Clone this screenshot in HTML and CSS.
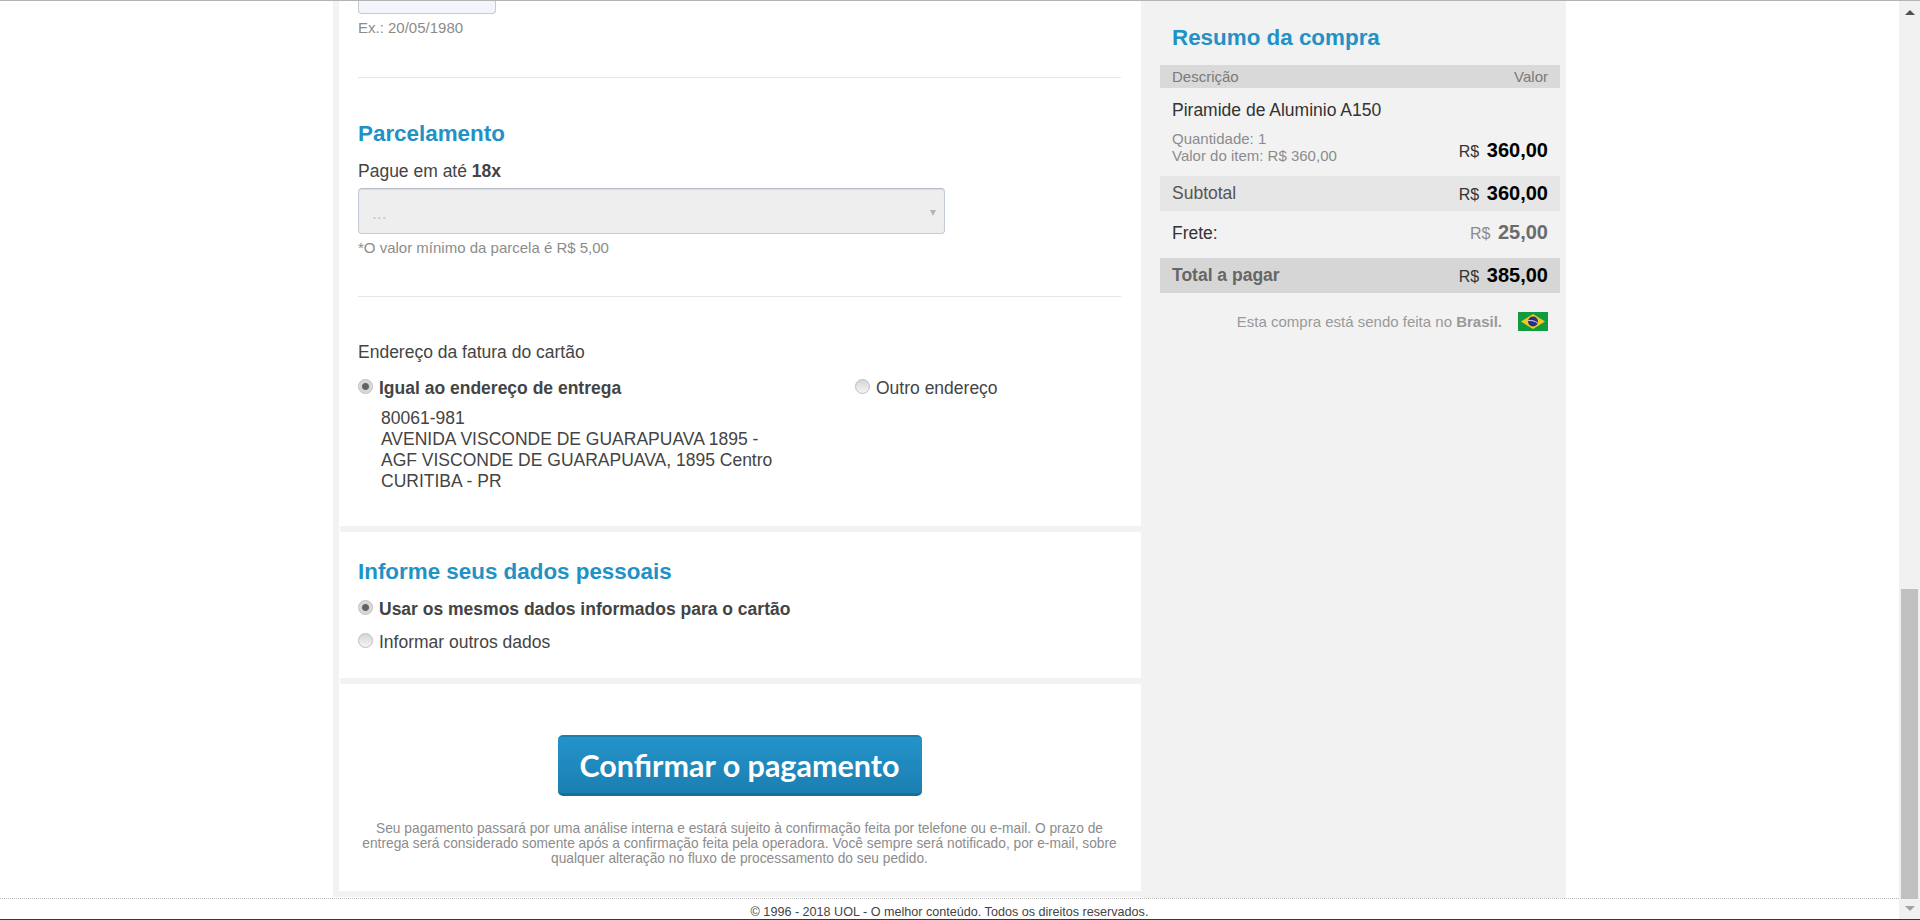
FILE: index.html
```html
<!DOCTYPE html>
<html lang="pt-BR">
<head>
    <meta charset="UTF-8">
    <meta name="viewport" content="width=device-width, initial-scale=1.0">
    <title>Pagamento</title>
    <link rel="stylesheet" href="styles.css">
</head>
<body>
    <div class="page">
        <div class="content">
            <div class="wrap">
                <!-- Payment form -->
                <div class="main">
                    <div class="section section-card">
                        <div class="date-input"></div>
                        <p class="hint">Ex.: 20/05/1980</p>
                        <hr class="rule rule-first">
                        <h2 class="title title-installments">Parcelamento</h2>
                        <p class="installments-label">Pague em até <b>18x</b></p>
                        <div class="select-box">
                            <span class="select-value">...</span>
                            <span class="select-arrow"></span>
                        </div>
                        <p class="hint">*O valor mínimo da parcela é R$ 5,00</p>
                        <hr class="rule rule-second">
                        <p class="address-label">Endereço da fatura do cartão</p>
                        <div class="address-row">
                            <div class="address-col">
                                <label class="option"><input type="radio" name="address" checked><b>Igual ao endereço de entrega</b></label>
                                <p class="address">80061-981<br>AVENIDA VISCONDE DE GUARAPUAVA 1895 -<br>AGF VISCONDE DE GUARAPUAVA, 1895 Centro<br>CURITIBA - PR</p>
                            </div>
                            <label class="option"><input type="radio" name="address">Outro endereço</label>
                        </div>
                    </div>

                    <div class="section section-personal">
                        <h2 class="title">Informe seus dados pessoais</h2>
                        <label class="option option-first"><input type="radio" name="personal" checked><b>Usar os mesmos dados informados para o cartão</b></label>
                        <label class="option option-second"><input type="radio" name="personal">Informar outros dados</label>
                    </div>

                    <div class="section-confirm">
                        <button type="button" class="confirm-button">Confirmar o pagamento</button>
                        <p class="confirm-note">Seu pagamento passará por uma análise interna e estará sujeito à confirmação feita por telefone ou e-mail. O prazo de entrega será considerado somente após a confirmação feita pela operadora. Você sempre será notificado, por e-mail, sobre qualquer alteração no fluxo de processamento do seu pedido.</p>
                    </div>
                </div>

                <!-- Order summary -->
                <div class="summary">
                    <h2 class="title summary-title">Resumo da compra</h2>
                    <div class="summary-head"><span>Descrição</span><span>Valor</span></div>
                    <p class="item-name">Piramide de Aluminio A150</p>
                    <div class="item-row">
                        <p class="item-details">Quantidade: 1<br>Valor do item: R$ 360,00</p>
                        <span class="price"><small>R$</small> 360,00</span>
                    </div>
                    <div class="summary-row row-subtotal"><span>Subtotal</span><span class="price"><small>R$</small> 360,00</span></div>
                    <div class="summary-row row-shipping"><span>Frete:</span><span class="price"><small>R$</small> 25,00</span></div>
                    <div class="summary-row row-total"><b>Total a pagar</b><span class="price"><small>R$</small> 385,00</span></div>
                    <div class="country">
                        <span>Esta compra está sendo feita no <b>Brasil.</b></span>
                        <svg class="flag" viewBox="0 0 30 19" width="30" height="19">
                            <rect width="30" height="19" fill="#0f9b3e"/>
                            <polygon points="15,2 27,9.5 15,17 3,9.5" fill="#f2c81e"/>
                            <circle cx="15" cy="9.5" r="5" fill="#2a2f86"/>
                            <path d="M10.2 8.6 C13 8 17 9 19.8 11" stroke="#d5d8e8" stroke-width="1" fill="none"/>
                        </svg>
                    </div>
                </div>
            </div>
        </div>
        <div class="footer">© 1996 - 2018 UOL - O melhor conteúdo. Todos os direitos reservados.</div>
    </div>

    <!-- Browser scrollbar -->
    <div class="scrollbar">
        <span class="arrow arrow-up"></span>
        <span class="thumb"></span>
        <span class="arrow arrow-down"></span>
    </div>
</body>
</html>
```

FILE: styles.css
```css
/* Basic styling for the page */
html {
    height: 920px;
    overflow: hidden;
}

body {
    display: flex;
    height: 920px;
    margin: 0;
    overflow: hidden;
    font-family: "Liberation Sans", Arial, sans-serif;
    font-size: 17.5px;
    color: #444;
    background-color: #fff;
    border-top: 1px solid #b3b3b3;
    border-bottom: 1px solid #2f3b42;
    box-sizing: border-box;
}

p, h2 {
    margin: 0;
}

.page {
    display: flex;
    flex: 1;
    flex-direction: column;
    min-width: 0;
}

.content {
    flex: 1;
    min-height: 0;
}

.wrap {
    display: flex;
    width: 1233px;
    height: 100%;
    margin: 0 auto;
}

.main {
    width: 802px;
    margin-bottom: 1px;
    border-left: 6px solid #f2f2f2;
    border-bottom: 6px solid #f2f2f2;
}

.section {
    margin-left: 1px;
    padding-left: 18px;
    border-bottom: 6px solid #f2f2f2;
    box-sizing: border-box;
}

.section-card {
    height: 531px;
    padding-right: 20px;
}

.date-input {
    width: 136px;
    height: 12px;
    background-color: #f2f5f9;
    border: 1px solid #c3cbd6;
    border-top: 0;
    border-radius: 0 0 4px 4px;
}

.hint {
    font-size: 15px;
    line-height: 16px;
    color: #8c8c8c;
    margin-top: 6px;
}

.rule {
    height: 1px;
    margin: 0;
    background-color: #e6e6e6;
    border: 0;
}

.rule-first {
    margin-top: 41px;
}

.rule-second {
    margin-top: 40px;
}

.title {
    font-size: 22.4px;
    line-height: 26px;
    font-weight: bold;
    color: #2191c6;
}

.title-installments {
    margin-top: 43px;
}

.installments-label {
    line-height: 20px;
    margin-top: 14px;
}

.select-box {
    display: flex;
    align-items: center;
    justify-content: space-between;
    width: 587px;
    height: 46px;
    margin-top: 7px;
    padding: 4px 8px 0 13px;
    background-color: #eee;
    border: 1px solid #c3cbd6;
    border-top-color: #b5bcc6;
    border-radius: 4px;
    box-shadow: inset 0 1px 1px rgba(0,0,0,.08);
    box-sizing: border-box;
}

.select-value {
    color: #c8c8c8;
}

.select-arrow {
    border-left: 3px solid transparent;
    border-right: 3px solid transparent;
    border-top: 6px solid #b5b5b5;
}

.address-label {
    line-height: 20px;
    margin-top: 45px;
}

.address-row {
    display: flex;
    margin-top: 16px;
}

.address-col {
    width: 497px;
}

.option {
    display: flex;
    align-items: flex-start;
    height: 20px;
    line-height: 20px;
}

.option input {
    appearance: none;
    flex: none;
    width: 15px;
    height: 15px;
    margin: 1px 6px 0 0;
    background: linear-gradient(#d6d6d6, #f4f4f4);
    border: 1px solid #bdbdbd;
    border-radius: 50%;
    box-sizing: border-box;
}

.option input:checked {
    background: radial-gradient(circle, #5f5f5f 0, #666 3px, #d4d4d4 4px, #e6e6e6 100%);
}

.address {
    line-height: 21px;
    margin: 10px 0 0 23px;
}

.section-personal {
    height: 152px;
    padding-top: 27px;
}

.option-first {
    margin-top: 14px;
}

.option-second {
    margin-top: 13px;
}

.section-confirm {
    margin-left: 1px;
    padding: 51px 20px 0 18px;
    text-align: center;
}

.confirm-button {
    display: block;
    width: 364px;
    height: 61px;
    margin: 0 auto;
    padding: 0;
    font-family: Lato, "Open Sans", sans-serif;
    font-size: 30.5px;
    font-weight: bold;
    color: #fff;
    background: linear-gradient(#2393c9, #1c7fb2);
    border: 0;
    border-top: 2px solid #1d7fae;
    border-bottom: 3px solid #176e9c;
    border-radius: 5px;
}

.confirm-note {
    font-size: 13.75px;
    line-height: 15px;
    color: #8c8c8c;
    margin-top: 25px;
}

/* Order summary */
.summary {
    width: 425px;
    padding: 0 6px 0 19px;
    background-color: #f2f2f2;
    box-sizing: border-box;
}

.summary-title {
    margin: 24px 0 14px 12px;
}

.summary-head {
    display: flex;
    justify-content: space-between;
    height: 23px;
    padding: 0 12px;
    font-size: 15px;
    line-height: 23px;
    color: #7a7a7a;
    background-color: #d9d9d9;
}

.item-name {
    color: #333;
    line-height: 20px;
    margin: 12px 12px 0;
}

.item-row {
    display: flex;
    justify-content: space-between;
    align-items: flex-end;
    margin-top: 10px;
    padding: 0 12px;
}

.item-details {
    font-size: 15px;
    line-height: 17px;
    color: #8c8c8c;
}

.price {
    font-size: 20px;
    line-height: 24px;
    font-weight: bold;
    color: #000;
}

.price small {
    font-size: 16px;
    font-weight: normal;
    color: #333;
    margin-right: 2px;
}

.summary-row {
    display: flex;
    justify-content: space-between;
    align-items: center;
    height: 35px;
    padding: 0 12px;
}

.row-subtotal {
    margin-top: 12px;
    color: #555;
    background-color: #e6e6e6;
}

.row-shipping {
    height: 47px;
    padding-bottom: 3px;
    box-sizing: border-box;
    color: #333;
}

.row-shipping .price {
    color: #6b6b6b;
}

.row-shipping .price small {
    color: #8c8c8c;
}

.row-total {
    color: #666;
    background-color: #d6d6d6;
}

.country {
    display: flex;
    justify-content: flex-end;
    align-items: center;
    gap: 16px;
    margin-top: 19px;
    padding-right: 12px;
    font-size: 15px;
    color: #999;
}

/* Footer */
.footer {
    height: 20px;
    overflow: hidden;
    font-size: 12.6px;
    line-height: 26px;
    color: #444;
    text-align: center;
    border-top: 1px dotted #bbb;
}

/* Scrollbar */
.scrollbar {
    display: flex;
    flex: none;
    flex-direction: column;
    align-items: center;
    width: 21px;
    background-color: #f1f1f1;
}

.arrow {
    flex: none;
    border-left: 5px solid transparent;
    border-right: 5px solid transparent;
}

.arrow-up {
    margin-top: 9px;
    border-bottom: 5px solid #505050;
}

.arrow-down {
    margin: 7px 0 8px;
    border-top: 5px solid #a3a3a3;
}

.thumb {
    width: 17px;
    height: 310px;
    margin-top: auto;
    background-color: #c1c1c1;
}
```
